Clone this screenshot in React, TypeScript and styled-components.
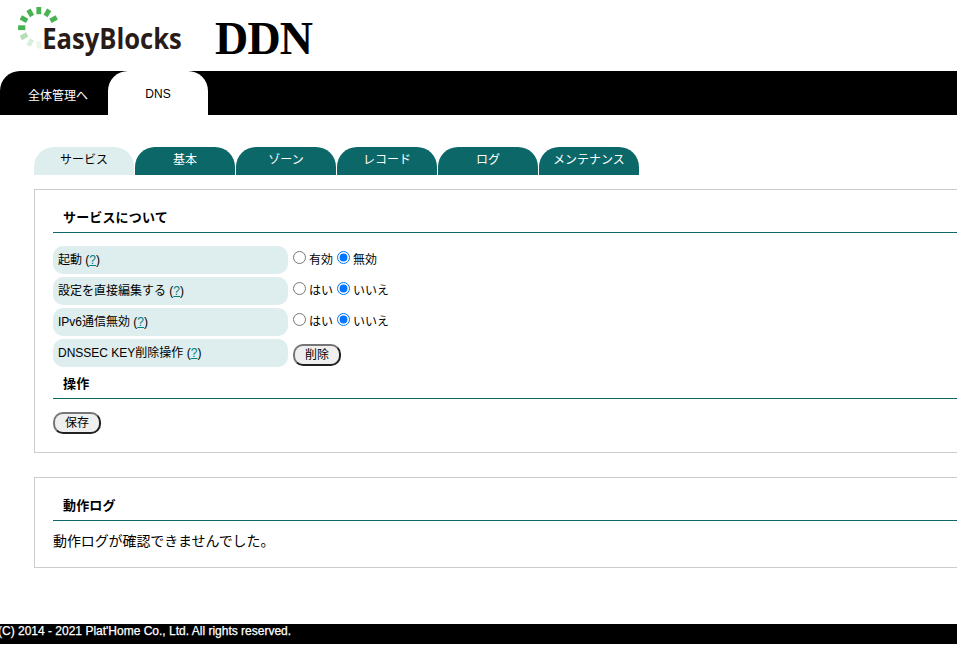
import React from "react";
import styled, { createGlobalStyle } from "styled-components";

const GlobalStyle = createGlobalStyle`
  * { box-sizing: border-box; }
  html, body { margin: 0; background: #fff; overflow: hidden; }
  body {
    color: #000;
    font-family: "Liberation Sans", "Noto Sans CJK JP", sans-serif;
    font-size: 12px;
    white-space: nowrap;
  }
`;

const Page = styled.div`
  height: 644px;
  display: flex;
  flex-direction: column;
`;

const Header = styled.header`
  height: 71px;
  flex: none;
  display: flex;
`;

const Logo = styled.svg`
  display: block;
  width: 200px;
  height: 71px;
  flex: none;
`;

const Product = styled.h1`
  margin: 10px 0 0 15px;
  font: bold 46px/58px "Liberation Serif", serif;
  letter-spacing: -0.8px;
`;

const MainNav = styled.nav`
  height: 44px;
  flex: none;
  display: flex;
  background: #000;
  border-top-left-radius: 20px;
`;

const MainTab = styled.a<{ $active?: boolean }>`
  width: ${(p) => (p.$active ? 100 : 108)}px;
  padding-left: ${(p) => (p.$active ? 0 : 8)}px;
  line-height: ${(p) => (p.$active ? 46 : 50)}px;
  text-align: center;
  color: ${(p) => (p.$active ? "#000" : "#fff")};
  background: ${(p) => (p.$active ? "#fff" : "transparent")};
  border-radius: 20px 20px 0 0;
`;

const SubNav = styled.nav`
  display: flex;
  gap: 1px;
  flex: none;
  margin: 32px 0 14px 34px;
`;

const SubTab = styled.a<{ $active?: boolean }>`
  width: 100px;
  height: 28px;
  line-height: 27px;
  text-align: center;
  border-radius: 20px 20px 0 0;
  color: ${(p) => (p.$active ? "#000" : "#fff")};
  background: ${(p) => (p.$active ? "#deeded" : "#0c6868")};
`;

const Panel = styled.section<{ $height: number }>`
  height: ${(p) => p.$height}px;
  flex: none;
  margin: 0 -10px 24px 34px;
  padding: 14px 0 0 18px;
  border: 1px solid #ccc;
`;

const Heading = styled.h2`
  height: 29px;
  margin: 0;
  padding-left: 10px;
  border-bottom: 1px solid #0c6868;
  font-size: 13px;
  line-height: 27px;
  letter-spacing: 0.15px;
`;

const Settings = styled.div`
  display: grid;
  gap: 3px;
  margin: 13px 0 3px;
`;

const SettingRow = styled.div`
  display: flex;
  gap: 5px;
  height: 28px;
`;

const SettingLabel = styled.div`
  width: 235px;
  padding-left: 5px;
  line-height: 29px;
  border-radius: 10px;
  background: #deeded;
`;

const Help = styled.a`
  color: #008080;
  text-decoration: underline;
`;

const Choices = styled.div`
  display: flex;
  gap: 4px;
`;

const Choice = styled.label`
  display: flex;
  gap: 3px;
  line-height: 28px;
`;

const Radio = styled.input`
  width: 13px;
  height: 13px;
  margin: 5px 0 0;
`;

const Button = styled.button<{ $top: number }>`
  display: block;
  width: 48px;
  height: 22px;
  margin: ${(p) => p.$top}px 0 0;
  padding: 0;
  border: 2px solid;
  border-color: #767676 #212121 #212121 #767676;
  border-radius: 10px;
  color: #000;
  background: #efefef;
  font: inherit;
  line-height: 17px;
`;

const LogText = styled.p`
  margin: 8px 0 0;
  font: 14px/22px "Noto Sans CJK JP", sans-serif;
  letter-spacing: -0.1px;
`;

const Footer = styled.footer`
  height: 20px;
  flex: none;
  margin-top: 32px;
  color: #fff;
  background: #000;
  line-height: 14px;
  text-indent: -2px;
  -webkit-text-stroke: 0.25px #fff;
`;

const spokes = [
  { angle: 60, opacity: 1 },
  { angle: 30, opacity: 1 },
  { angle: 0, opacity: 1 },
  { angle: -30, opacity: 1 },
  { angle: -60, opacity: 1 },
  { angle: -90, opacity: 1 },
  { angle: -120, opacity: 0.42 },
  { angle: -150, opacity: 0.22 },
  { angle: 180, opacity: 0.12 },
];

const settings = [
  { label: "起動", options: ["有効", "無効"] },
  { label: "設定を直接編集する", options: ["はい", "いいえ"] },
  { label: "IPv6通信無効", options: ["はい", "いいえ"] },
  { label: "DNSSEC KEY削除操作", options: [] },
];

const subTabs = ["サービス", "基本", "ゾーン", "レコード", "ログ", "メンテナンス"];

const EasyBlocksLogo = () => (
  <Logo viewBox="0 0 200 71" role="img" aria-label="EasyBlocks">
    {spokes.map((s) => (
      <rect
        key={s.angle}
        x="36.4"
        y="7"
        width="4.8"
        height="7.2"
        fill="#49b253"
        opacity={s.opacity}
        transform={`rotate(${s.angle} 38.8 27.7)`}
      />
    ))}
    <text
      x="42.3"
      y="49"
      textLength="139.5"
      lengthAdjust="spacingAndGlyphs"
      fontFamily="Open Sans, Noto Sans, sans-serif"
      fontWeight="700"
      fontSize="28"
      fill="#281b18"
    >
      EasyBlocks
    </text>
  </Logo>
);

export default function App() {
  return (
    <>
      <GlobalStyle />
      <Page>
        <Header>
          <EasyBlocksLogo />
          <Product>DDN</Product>
        </Header>
        <MainNav>
          <MainTab>全体管理へ</MainTab>
          <MainTab $active>DNS</MainTab>
        </MainNav>
        <SubNav>
          {subTabs.map((tab, i) => (
            <SubTab key={tab} $active={i === 0}>{tab}</SubTab>
          ))}
        </SubNav>
        <Panel $height={264}>
          <Heading>サービスについて</Heading>
          <Settings>
            {settings.map((row) => (
              <SettingRow key={row.label}>
                <SettingLabel>
                  {row.label} (<Help>?</Help>)
                </SettingLabel>
                {row.options.length ? (
                  <Choices>
                    {row.options.map((option, i) => (
                      <Choice key={option}>
                        <Radio type="radio" name={row.label} defaultChecked={i === 1} />
                        {option}
                      </Choice>
                    ))}
                  </Choices>
                ) : (
                  <Button $top={5}>削除</Button>
                )}
              </SettingRow>
            ))}
          </Settings>
          <Heading>操作</Heading>
          <Button $top={13}>保存</Button>
        </Panel>
        <Panel $height={91}>
          <Heading>動作ログ</Heading>
          <LogText>動作ログが確認できませんでした。</LogText>
        </Panel>
        <Footer>(C) 2014 - 2021 Plat'Home Co., Ltd. All rights reserved.</Footer>
      </Page>
    </>
  );
}
